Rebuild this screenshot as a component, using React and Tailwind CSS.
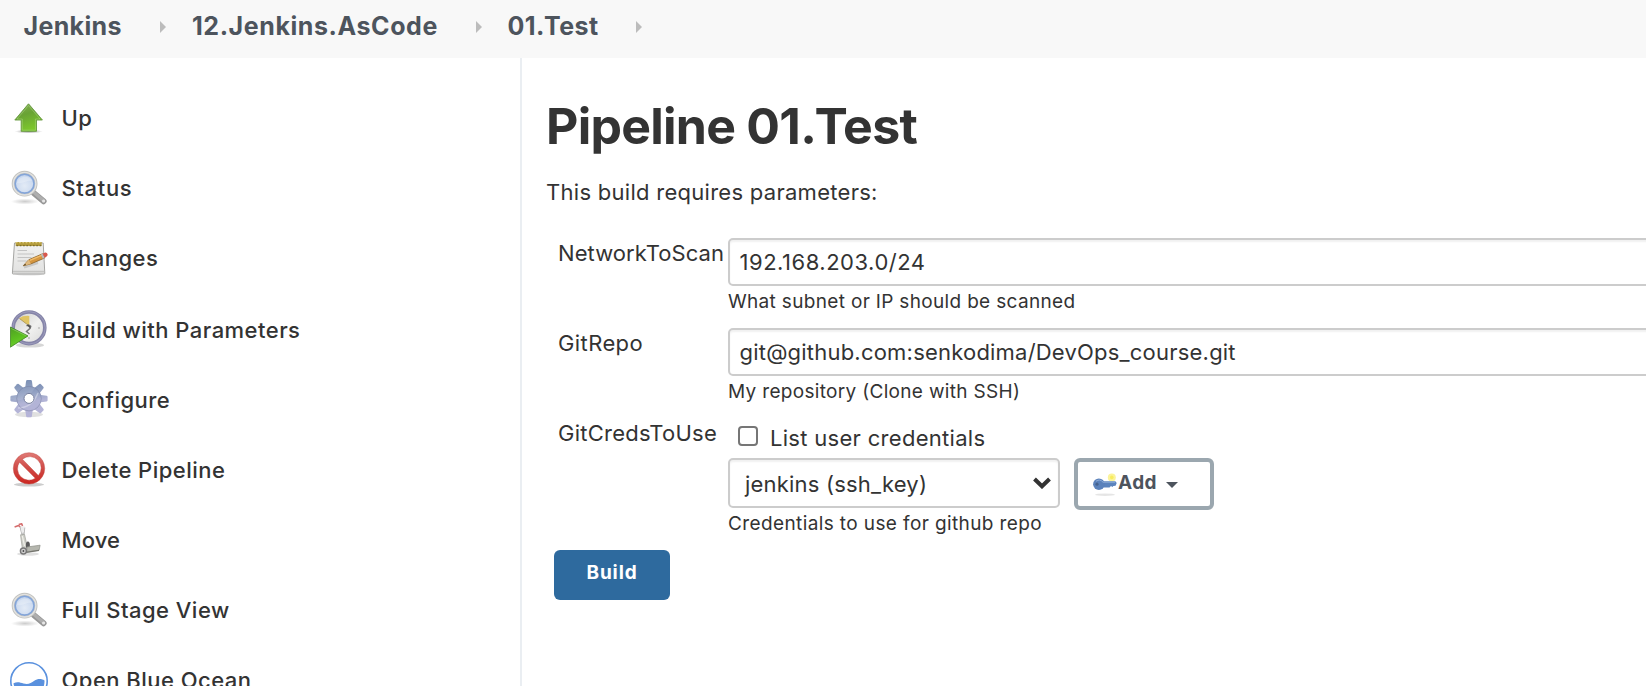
import React from 'react';

function UpIcon() {
  return (
    <svg width="38" height="38" viewBox="0 0 38 38">
      <defs>
        <linearGradient id="up" x1="0" y1="0" x2="0.3" y2="1">
          <stop offset="0" stopColor="#86ad56" />
          <stop offset="0.45" stopColor="#69a334" />
          <stop offset="1" stopColor="#7cc62c" />
        </linearGradient>
        <radialGradient id="shade">
          <stop offset="0" stopColor="#000" stopOpacity="0.4" />
          <stop offset="1" stopColor="#000" stopOpacity="0" />
        </radialGradient>
      </defs>
      <ellipse cx="18.7" cy="33.5" rx="14" ry="2" fill="url(#shade)" />
      <path d="M18.5 5.8 32.4 22h-5.9v11.3H11.2V22H4.8z" fill="url(#up)" stroke="#67993f" strokeWidth="0.9" strokeLinejoin="round" />
      <path d="M18.5 7.5 30 21h-4.6v11.2H12.3V21H7z" fill="none" stroke="#b4dc8e" strokeOpacity="0.55" strokeWidth="0.8" />
    </svg>
  );
}

function SearchIcon() {
  return (
    <svg width="38" height="38" viewBox="0 0 38 38">
      <defs>
        <radialGradient id="lens" cx="0.5" cy="0.6" r="0.6">
          <stop offset="0" stopColor="#e3ebf6" />
          <stop offset="0.7" stopColor="#cad9ef" />
          <stop offset="1" stopColor="#a3bfe8" />
        </radialGradient>
        <radialGradient id="searchShade">
          <stop offset="0" stopColor="#000" stopOpacity="0.2" />
          <stop offset="1" stopColor="#000" stopOpacity="0" />
        </radialGradient>
      </defs>
      <ellipse cx="15" cy="33.5" rx="14" ry="3" fill="url(#searchShade)" />
      <path d="m24 25.2 9.6 8" stroke="#979797" strokeWidth="6" strokeLinecap="round" />
      <path d="m24.4 24.8 9.2 7.8" stroke="#aeaeae" strokeWidth="3.4" strokeLinecap="round" />
      <circle cx="33.6" cy="33" r="1.6" fill="#e6e6e6" />
      <circle cx="14.6" cy="15.7" r="11.4" fill="url(#lens)" stroke="#c2c2bf" strokeWidth="3" />
      <circle cx="14.6" cy="15.7" r="11.3" fill="none" stroke="#e2e2e0" strokeWidth="1.4" />
      <circle cx="14.6" cy="15.7" r="9.4" fill="none" stroke="#84a5d8" strokeWidth="1.6" />
      <path d="M7 15c1-7 12-9 15-2-5-1-9 3-15 2z" fill="#fff" opacity="0.25" />
    </svg>
  );
}

function NotepadIcon() {
  return (
    <svg width="38" height="38" viewBox="0 0 38 38">
      <defs>
        <linearGradient id="paper" x1="0" y1="0" x2="0" y2="1">
          <stop offset="0" stopColor="#f1f1f0" />
          <stop offset="1" stopColor="#e2e2e1" />
        </linearGradient>
      </defs>
      <ellipse cx="19" cy="36" rx="14" ry="1.6" fill="#000" opacity="0.12" />
      <path d="M4.5 5h28.7l1.6 30.3q0 .7-.8.7H3.2q-.9 0-.8-.9z" fill="url(#paper)" stroke="#a5a5a3" strokeWidth="1" />
      <path d="M3 33.6h31.3" stroke="#c4c4c2" strokeWidth="1.6" />
      <rect x="5.7" y="4" width="26" height="4" fill="#b29a3b" />
      <path d="M5.7 4.6h26" stroke="#d9c574" strokeWidth="1.2" strokeDasharray="1.8 1.5" />
      <path d="M6.5 7.6h25" stroke="#7b6c2e" strokeWidth="1.2" strokeDasharray="1.6 1.7" />
      <path d="M7.5 12.5h9.5M7.5 16h16.5M7.5 19.5h14M7.5 23h9" stroke="#c3c3c3" strokeWidth="1.1" />
      <path d="m14 29.2 14-4.5" stroke="#000" strokeOpacity="0.13" strokeWidth="2.5" />
      <path d="m13.2 27.8 5.6-6.1 13.9-6 2 4.3-13.8 5.9z" fill="#d5963f" stroke="#8a6228" strokeWidth="0.8" />
      <path d="m19.8 22.3 13-5.5" stroke="#f1bd6c" strokeWidth="1.3" />
      <path d="m13.2 27.8 5.6-6.1 2.1 4.2z" fill="#dfba80" />
      <path d="m13.2 27.8 2-2.1.8 1.4z" fill="#4a3a20" />
      <path d="m30.8 16.5 2-.9 2 4.300-2 .9z" fill="#b9b9b9" />
      <path d="m32.8 15.6 2.500-1q1.700-.2 2.200 1.500.4 1.500-.9 2.400l-1.900 1.400z" fill="#d8584d" />
    </svg>
  );
}

function ClockIcon() {
  return (
    <svg width="38" height="38" viewBox="0 0 38 38">
      <defs>
        <linearGradient id="face" x1="0" y1="0" x2="1" y2="1">
          <stop offset="0" stopColor="#c9c9c8" />
          <stop offset="0.55" stopColor="#f1f1f0" />
          <stop offset="1" stopColor="#d8d8d7" />
        </linearGradient>
        <linearGradient id="play" x1="0" y1="0" x2="0.4" y2="1">
          <stop offset="0" stopColor="#4f9c24" />
          <stop offset="0.6" stopColor="#5cbf20" />
          <stop offset="1" stopColor="#6fcf31" />
        </linearGradient>
      </defs>
      <ellipse cx="20" cy="35.2" rx="14" ry="2.4" fill="#000" opacity="0.16" />
      <circle cx="19" cy="17.8" r="15.8" fill="url(#face)" stroke="#8584a8" strokeWidth="3.6" />
      <circle cx="19" cy="17.8" r="16.2" fill="none" stroke="#a1a1c0" strokeWidth="0.8" />
      <path d="M9.200 8.300Q13 5.400 19.300 5.900v9.800z" fill="#e0c463" />
      <path d="M9.500 8.500 19.200 16" stroke="#a89048" strokeWidth="0.8" />
      <path d="M16.500 16q2.200-1.500 4.200.3l-.6 2-3.600 3.200 3 2.500" fill="none" stroke="#777" strokeWidth="1.5" />
      <path d="m20.200 17.500-2.700-2.800" stroke="#4a4a4a" strokeWidth="1.4" />
      <path d="M30 18h-2M19 29v-2" stroke="#aaa" strokeWidth="1.2" />
      <path d="M.4 17 18 25.900.4 37.200z" fill="url(#play)" stroke="#3f8423" strokeWidth="0.8" />
      <path d="M1.200 18.400 16 25.800" stroke="#a3dd7b" strokeOpacity="0.6" strokeWidth="0.8" />
    </svg>
  );
}

const TEETH = [0, 45, 90, 135, 180, 225, 270, 315];

function GearIcon() {
  return (
    <svg width="38" height="38" viewBox="0 0 38 38">
      <defs>
        <linearGradient id="gear" gradientUnits="userSpaceOnUse" x1="15" y1="0" x2="22" y2="37">
          <stop offset="0" stopColor="#6b82ab" />
          <stop offset="0.42" stopColor="#98a5c6" />
          <stop offset="0.6" stopColor="#b2b4d6" />
          <stop offset="1" stopColor="#b5b3d8" />
        </linearGradient>
        <mask id="gearMask">
          <circle cx="19" cy="18.6" r="12.6" fill="#fff" />
          {TEETH.map((a) => (
            <path key={a} d="M15.100 8.500 16.100 1q.2-1 1.200-1h3.400q1 0 1.200 1l1 7.500z" fill="#fff" transform={`rotate(${a} 19 18.6)`} />
          ))}
        </mask>
      </defs>
      <ellipse cx="19" cy="34.5" rx="14" ry="2.8" fill="#000" opacity="0.12" />
      <g mask="url(#gearMask)">
        <rect width="38" height="38" fill="url(#gear)" />
        <path d="M0 19q11 3 17-2T27 5V0H0z" fill="#fff" opacity="0.1" />
        <path d="M8 28q14 0 20-15" fill="none" stroke="#fff" strokeOpacity="0.35" strokeWidth="1.5" />
        <circle cx="19" cy="18.6" r="12.3" fill="none" stroke="#6e7698" strokeOpacity="0.4" strokeWidth="1" />
      </g>
      <circle cx="19" cy="18.4" r="5" fill="#fff" stroke="#77809f" strokeWidth="1" />
    </svg>
  );
}

function DeleteIcon() {
  return (
    <svg width="38" height="38" viewBox="0 0 38 38">
      <defs>
        <linearGradient id="ban" x1="0" y1="0" x2="0" y2="1">
          <stop offset="0" stopColor="#e07a76" />
          <stop offset="0.5" stopColor="#d04a46" />
          <stop offset="1" stopColor="#cc2620" />
        </linearGradient>
      </defs>
      <ellipse cx="19" cy="34.6" rx="15" ry="2" fill="#000" opacity="0.2" />
      <path fillRule="evenodd" d="M19 2.700a15.700 15.700 0 1 0 .01 0zM12.400 9.200 28.400 25.600A11.500 11.500 0 0 0 12.400 9.200zM9.500 12.200 25.300 28.300A11.500 11.500 0 0 1 9.500 12.200z" fill="url(#ban)" stroke="#b93b36" strokeOpacity="0.6" strokeWidth="0.7" />
    </svg>
  );
}

function MoveIcon() {
  return (
    <svg width="38" height="38" viewBox="0 0 38 38">
      <ellipse cx="18" cy="34" rx="11" ry="1.8" fill="#000" opacity="0.12" />
      <path d="m10.300 7 2.500 10M14.600 7.500l-1 9" stroke="#b1b1b1" strokeWidth="1.4" fill="none" />
      <path d="m10.400 6.500 4.200-.2-.6 6-2.400.5z" fill="#ededed" />
      <path d="m4.600 7 4-1.400 1.600 1.200M8.800 4.600l2.900-.9.8 2.200" stroke="#d46c6c" strokeWidth="1.6" fill="none" strokeLinejoin="round" />
      <path d="m10.500 14.800 4-.4 3.200 14.200-5.200 1z" fill="#cdcec7" stroke="#a2a39c" strokeWidth="0.7" />
      <path d="m12.300 16 2.300 10" stroke="#f0f0ea" strokeWidth="1.2" />
      <ellipse cx="17.900" cy="25" rx="2" ry="3.600" fill="#5a5a5a" />
      <path d="m17 27 13.100-1.800-1 5-12.300 1.900z" fill="#b5b6ae" stroke="#8b8c85" strokeWidth="0.7" />
      <path d="m16 32.400 13-2" stroke="#74756e" strokeWidth="1.1" />
      <circle cx="13.400" cy="31" r="3.700" fill="#777" />
      <circle cx="13.400" cy="31" r="2.300" fill="#cfcfcf" />
      <circle cx="13.400" cy="31" r="0.9" fill="#4a4a4a" />
    </svg>
  );
}

function OceanIcon() {
  return (
    <svg width="38" height="38" viewBox="0 0 38 38">
      <circle cx="19" cy="19" r="18.2" fill="#fff" stroke="#5a91de" strokeWidth="1.6" />
      <path d="M3.500 21.200c4-1.800 6.800-.6 10 .4 4.500 1.300 7.500-.2 10.800-2.800 3.300-2.500 7.500-2.200 10.200-.3.400 8.700-6 16-15.500 16-8 0-14.500-5.500-15.500-13.300z" fill="#5a91de" />
    </svg>
  );
}

function KeyIcon() {
  return (
    <svg width="24" height="24" viewBox="0 0 24 24">
      <ellipse cx="12" cy="21.700" rx="10" ry="1.300" fill="#000" opacity="0.1" />
      <circle cx="18.800" cy="4.400" r="4" fill="#fbf39a" />
      <circle cx="18.800" cy="4.400" r="1.800" fill="#f8ec5f" />
      <path d="M9 8.200h13.400l1.300 1.800-1.100 2.700-2.300.3-.9 1-1.400-1-1.500 1.400H9z" fill="#5c84bd" />
      <circle cx="5.900" cy="11.200" r="5.800" fill="#5b82bb" />
      <path d="M3 8.200q4-2.700 7 1h12" fill="none" stroke="#8fadd8" strokeWidth="1" />
      <circle cx="4" cy="11.200" r="1.600" fill="#46638f" />
    </svg>
  );
}

function Arrow() {
  return (
    <svg width="6" height="12" viewBox="0 0 6 12" className="mt-[2px] shrink-0">
      <path d="M0 0 6 6 0 12z" fill="#bcbcbc" />
    </svg>
  );
}

function Task({ icon, children, className = '' }) {
  return (
    <a className={`flex h-[70px] items-center gap-[13.5px] pl-[10px] ${className}`}>
      <span className="-mt-[2px] block shrink-0">{icon}</span>
      <span className="-mt-px whitespace-nowrap text-[22px] leading-[30px] font-[470] tracking-[0.47px] text-[#333]">{children}</span>
    </a>
  );
}

function Label({ children, className = '' }) {
  return (
    <div className={`w-[182px] shrink-0 pl-[12px] text-[22px] leading-[30px] ${className}`}>{children}</div>
  );
}

function TextField({ value, className }) {
  return (
    <div role="textbox" className={`-mr-3 flex h-[48px] items-center rounded-[5px] border-2 border-[#ccc] bg-white pl-[9.5px] text-[22px] whitespace-nowrap shadow-[inset_0_2px_2px_rgba(0,0,0,0.06)] ${className}`}>
      {value}
    </div>
  );
}

function Hint({ children, className }) {
  return <div className={`text-[19px] leading-[24px] whitespace-nowrap ${className}`}>{children}</div>;
}

export default function App() {
  return (
    <div className="flex h-[686px] w-full flex-col overflow-hidden bg-white font-['Inter',sans-serif] text-[#333]">
      <header className="flex h-[58px] shrink-0 items-center bg-[#f8f8f8] pb-[7px] pl-[23.5px] text-[25px] leading-[50px] font-[680] whitespace-nowrap text-[#4d545d]">
        <span className="w-[136.5px] tracking-[0.35px]">Jenkins</span>
        <Arrow />
        <span className="ml-[26px] w-[284px] tracking-[0.58px]">12.Jenkins.AsCode</span>
        <Arrow />
        <span className="ml-[25.5px] w-[128.5px] tracking-[0.45px]">01.Test</span>
        <Arrow />
      </header>

      <div className="flex min-h-0 flex-1">
        <nav className="w-[520px] shrink-0 pt-[25px]">
          <Task icon={<UpIcon />}>Up</Task>
          <Task icon={<SearchIcon />}><span className="tracking-[0.65px]">Status</span></Task>
          <Task icon={<NotepadIcon />}>Changes</Task>
          <Task icon={<ClockIcon />} className="mt-[2px]">Build with Parameters</Task>
          <Task icon={<GearIcon />}>Configure</Task>
          <Task icon={<DeleteIcon />}>Delete Pipeline</Task>
          <Task icon={<MoveIcon />}><span className="tracking-[0.1px]">Move</span></Task>
          <Task icon={<SearchIcon />}>Full Stage View</Task>
          <Task icon={<div className="pt-[3px]"><OceanIcon /></div>}>Open Blue Ocean</Task>
        </nav>

        <main className="min-w-0 flex-1 border-l-2 border-[#eaeef2] pt-[38px] pl-[24px]">
          <h1 className="text-[50px] leading-[60px] font-bold tracking-[-0.75px]">Pipeline 01.Test</h1>
          <p className="mt-[21px] text-[22px] leading-[30px] tracking-[0.28px]">This build requires parameters:</p>

          <div className="mt-[31px] flex">
            <Label className="tracking-[0.08px]">NetworkToScan</Label>
            <div className="min-w-0 flex-1">
              <TextField value="192.168.203.0/24" className="tracking-[0.52px]" />
              <Hint className="mt-[4px] tracking-[0.33px]">What subnet or IP should be scanned</Hint>
            </div>
          </div>

          <div className="mt-[14px] flex">
            <Label className="tracking-[0.4px]">GitRepo</Label>
            <div className="min-w-0 flex-1">
              <TextField value="git@github.com:senkodima/DevOps_course.git" className="tracking-[0.21px]" />
              <Hint className="mt-[4px] tracking-[0.32px]">My repository (Clone with SSH)</Hint>
            </div>
          </div>

          <div className="mt-[14px] flex">
            <Label className="tracking-[0.26px]">GitCredsToUse</Label>
            <div className="min-w-0 flex-1">
              <label className="flex h-[40px] items-center pl-[10px]">
                <span role="checkbox" aria-checked="false" className="-mt-[4px] size-5 shrink-0 rounded-[4px] border-2 border-[#767676] bg-white" />
                <span className="-mt-px ml-[12px] text-[22px] leading-[30px] tracking-[0.3px]">List user credentials</span>
              </label>
              <div className="flex h-[52px] items-start gap-[14px]">
                <div role="combobox" className="flex h-[50px] w-[332px] items-center justify-between rounded-[5px] border-2 border-[#ccc] bg-white pr-[7px] pl-[15px] shadow-[inset_0_2px_2px_rgba(0,0,0,0.06)]">
                  <span className="pt-px text-[22px] leading-[30px] tracking-[0.2px]">jenkins (ssh_key)</span>
                  <svg width="18" height="12" viewBox="0 0 18 12">
                    <path d="m1.500 2 7.500 7.300L16.500 2" fill="none" stroke="#333" strokeWidth="4" />
                  </svg>
                </div>
                <button className="flex h-[52px] w-[140px] items-center rounded-[6px] border-4 border-[#9ba7af] bg-white pb-[2px] pl-[15px] text-[19px] leading-[24px] font-bold tracking-[0.39px] text-[#4d545d]">
                  <span className="mt-[4px]"><KeyIcon /></span>
                  <span className="ml-px">Add</span>
                  <svg width="12" height="6" viewBox="0 0 12 6" className="mt-[4px] ml-[9px]">
                    <path d="M0 0h12L6 6z" fill="#4d545d" />
                  </svg>
                </button>
              </div>
              <Hint className="mt-[2px] tracking-[0.39px]">Credentials to use for github repo</Hint>
            </div>
          </div>

          <button className="mt-[14px] ml-[8px] flex h-[50px] w-[116px] items-center justify-center rounded-[6px] bg-[#2e6a9e] pb-[4px] text-[19px] leading-[24px] font-bold tracking-[0.9px] text-white">
            Build
          </button>
        </main>
      </div>
    </div>
  );
}
